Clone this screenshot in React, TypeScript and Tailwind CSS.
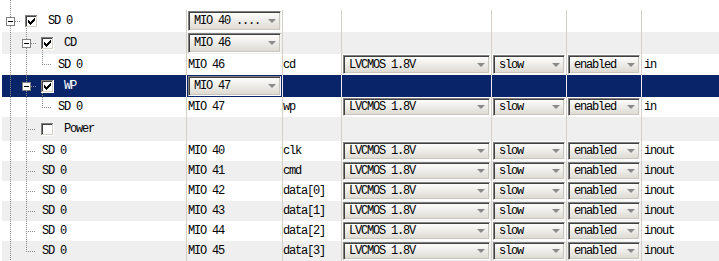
type Y = 't' | 'm' | 'c' | 'b';
type Seg = [number, Y, number, Y];

interface TreeSpec {
  segs: Seg[];
  box?: number;
  cb?: boolean;
  x: number;
  label: string;
}

interface RowData {
  h: number;
  hc: string;
  sel?: boolean;
  tree: TreeSpec;
  mio?: string;
  mioCombo?: boolean;
  sig?: string;
  io?: boolean;
  dir?: string;
}

const V10: Seg = [10, 't', 10, 'b'];
const V26: Seg = [26, 't', 26, 'b'];

const groupTree = (label: string): TreeSpec => ({
  segs: [V10, V26, [31, 'm', 36, 'm'], [42, 'c', 42, 'b']],
  box: 26,
  cb: true,
  x: 41,
  label,
});

const subLeaf: TreeSpec = {
  segs: [V10, V26, [42, 't', 42, 'm'], [42, 'm', 52, 'm']],
  x: 58,
  label: 'SD 0',
};

const leaf = (last = false): TreeSpec => ({
  segs: [V10, last ? [26, 't', 26, 'm'] : V26, [26, 'm', 35, 'm']],
  x: 42,
  label: 'SD 0',
});

const ROWS: RowData[] = [
  {
    h: 22, hc: 'h-[22px]',
    tree: { segs: [V10, [15, 'm', 20, 'm'], [26, 'c', 26, 'b']], box: 10, cb: true, x: 25, label: 'SD 0' },
    mio: 'MIO 40 ....', mioCombo: true,
  },
  { h: 22, hc: 'h-[22px]', tree: groupTree('CD'), mio: 'MIO 46', mioCombo: true },
  { h: 21, hc: 'h-[21px]', tree: subLeaf, mio: 'MIO 46', sig: 'cd', io: true, dir: 'in' },
  { h: 22, hc: 'h-[22px]', sel: true, tree: groupTree('WP'), mio: 'MIO 47', mioCombo: true },
  { h: 20, hc: 'h-[20px]', tree: subLeaf, mio: 'MIO 47', sig: 'wp', io: true, dir: 'in' },
  {
    h: 24, hc: 'h-[24px]',
    tree: { segs: [V10, V26, [26, 'm', 36, 'm']], cb: false, x: 41, label: 'Power' },
  },
  { h: 20, hc: 'h-[20px]', tree: leaf(), mio: 'MIO 40', sig: 'clk', io: true, dir: 'inout' },
  { h: 20, hc: 'h-[20px]', tree: leaf(), mio: 'MIO 41', sig: 'cmd', io: true, dir: 'inout' },
  { h: 20, hc: 'h-[20px]', tree: leaf(), mio: 'MIO 42', sig: 'data[0]', io: true, dir: 'inout' },
  { h: 20, hc: 'h-[20px]', tree: leaf(), mio: 'MIO 43', sig: 'data[1]', io: true, dir: 'inout' },
  { h: 20, hc: 'h-[20px]', tree: leaf(), mio: 'MIO 44', sig: 'data[2]', io: true, dir: 'inout' },
  { h: 20, hc: 'h-[20px]', tree: leaf(true), mio: 'MIO 45', sig: 'data[3]', io: true, dir: 'inout' },
];

// classic 7x7 check mark: [row, col, width]
const CHECK_ROWS: [number, number, number][] = [
  [0, 6, 1],
  [1, 5, 2],
  [2, 0, 1], [2, 4, 3],
  [3, 0, 2], [3, 3, 3],
  [4, 0, 5],
  [5, 1, 3],
  [6, 2, 1],
];

function CheckBox({ on }: { on: boolean }) {
  return (
    <svg width="13" height="13" className="shrink-0" shapeRendering="crispEdges">
      <rect x="0" y="0" width="13" height="13" fill="#ffffff" />
      <path d="M0 0.5H12.5M0.5 0V13" stroke="#808080" />
      <path d="M1 1.5H11.5M1.5 1V12" stroke="#404040" />
      <path d="M1 11.5H12M11.5 1V12" stroke="#d4d0c8" />
      <path d="M0 12.5H13M12.5 0V13" stroke="#ffffff" />
      {on &&
        CHECK_ROWS.map(([r, c, w], i) => (
          <rect key={i} x={3 + c} y={3 + r} width={w} height={1} fill="#000000" />
        ))}
    </svg>
  );
}

function Combo({ text }: { text: string }) {
  return (
    <div className="flex h-full w-full items-center justify-between border border-t-[#808080] border-l-[#808080] border-b-white border-r-[#f4f4f4] bg-linear-to-b from-white to-[#dcd9d1] pl-[5px] pr-[4px] shadow-[inset_1px_1px_0_#404040,inset_-1px_-1px_0_#c8c5bd]">
      <span className="whitespace-pre text-black">{text}</span>
      <svg width="8" height="4" className="shrink-0">
        <path d="M0 0H8L4 4Z" fill="#8a8a8a" />
      </svg>
    </div>
  );
}

function TreeCell({ t, h, sel }: { t: TreeSpec; h: number; sel?: boolean }) {
  const mid = Math.floor(h / 2);
  const yOf = (y: Y) => (y === 't' ? 0 : y === 'b' ? h : y === 'm' ? mid + 0.5 : mid + 7);
  return (
    <div
      className={`relative flex h-full items-center border-r ${sel ? 'border-[#eeeeee]' : 'border-[#d4d0c8]'}`}
      style={{ paddingLeft: t.x - 2 }}
    >
      <svg className="pointer-events-none absolute inset-0" width="184" height={h} shapeRendering="crispEdges">
        <g transform="translate(-2 0)">
          {t.segs.map(([x1, y1, x2, y2], i) => {
            const vert = x1 === x2;
            return (
              <line
                key={i}
                x1={vert ? x1 + 0.5 : x1}
                y1={yOf(y1)}
                x2={vert ? x2 + 0.5 : x2}
                y2={yOf(y2)}
                stroke="#8c8c8c"
                strokeDasharray="1 1"
              />
            );
          })}
          {t.box !== undefined && (
            <g>
              <rect x={t.box - 3.5} y={mid - 3.5} width="8" height="8" fill="#ffffff" stroke="#808080" />
              <line x1={t.box - 2} y1={mid + 0.5} x2={t.box + 3} y2={mid + 0.5} stroke="#000000" />
            </g>
          )}
        </g>
      </svg>
      {t.cb !== undefined && (
        <div className="relative mr-[10px]">
          <CheckBox on={t.cb} />
        </div>
      )}
      <span className={`relative whitespace-pre ${sel ? 'text-white' : 'text-black'}`}>{t.label}</span>
    </div>
  );
}

export default function App() {
  return (
    <div className="h-[261px] w-[719px] overflow-hidden bg-white pl-[2px] font-['Liberation_Mono',monospace] text-[12px] leading-none tracking-[-1.2px] text-black">
      <div className="h-[10px]">
        <svg width="20" height="10" shapeRendering="crispEdges">
          <line x1="8.5" y1="0" x2="8.5" y2="10" stroke="#8c8c8c" strokeDasharray="1 1" />
        </svg>
      </div>
      {ROWS.map((r, i) => {
        const bg = r.sel ? 'bg-[#0a246a]' : i % 2 ? 'bg-[#efefef]' : 'bg-white';
        const sep = r.sel ? 'border-r border-[#eeeeee]' : 'border-r border-[#d4d0c8]';
        return (
          <div key={i} className={`grid grid-cols-[185px_96px_59px_150px_75px_75px_1fr] ${r.hc} ${bg}`}>
            <TreeCell t={r.tree} h={r.h} sel={r.sel} />
            <div className={`flex h-full items-center ${sep} ${r.mioCombo ? 'px-px py-px' : 'pl-px'}`}>
              {r.mio && (r.mioCombo ? <Combo text={r.mio} /> : <span className="whitespace-pre">{r.mio}</span>)}
            </div>
            <div className={`flex h-full items-center ${sep}`}>
              {r.sig && <span className="whitespace-pre">{r.sig}</span>}
            </div>
            <div className={`h-full px-px py-px ${sep}`}>{r.io && <Combo text="LVCMOS 1.8V" />}</div>
            <div className={`h-full px-px py-px ${sep}`}>{r.io && <Combo text="slow" />}</div>
            <div className={`h-full px-px py-px ${sep}`}>{r.io && <Combo text="enabled" />}</div>
            <div className="flex h-full items-center pl-[2px]">
              {r.dir && <span className="whitespace-pre">{r.dir}</span>}
            </div>
          </div>
        );
      })}
    </div>
  );
}
